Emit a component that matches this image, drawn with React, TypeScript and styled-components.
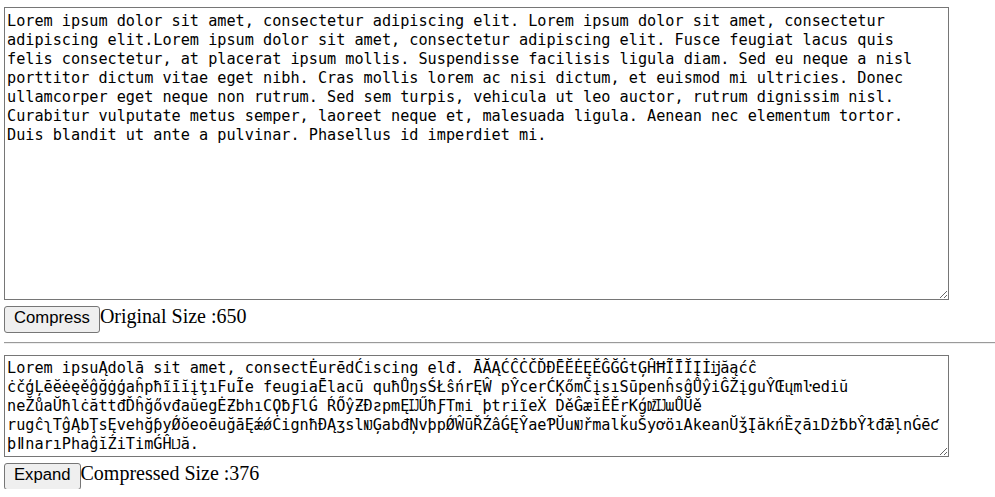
import React from "react";
import styled, { createGlobalStyle } from "styled-components";

const GlobalStyle = createGlobalStyle`
  html, body {
    background: #ffffff;
  }
  body {
    margin: 7px 0 0 4px;
    font-family: "Liberation Serif", "Times New Roman", serif;
    color: #000000;
  }
`;

const Page = styled.main`
  display: flex;
  flex-direction: column;
`;

const Section = styled.section`
  display: flex;
  flex-direction: column;
  gap: 5px;
`;

const TextArea = styled.textarea<{ $height: number; $pre?: boolean; $top: number }>`
  display: block;
  box-sizing: border-box;
  width: 945px;
  height: ${(p) => p.$height}px;
  margin: 0;
  padding: ${(p) => p.$top}px ${(p) => (p.$pre ? 2 : 31)}px 2px 2px;
  border: 1px solid #767676;
  border-radius: 0;
  background: #ffffff;
  color: #000000;
  font-family: "DejaVu Sans Mono", "Liberation Mono", monospace;
  font-size: 15.2px;
  line-height: 19px;
  white-space: ${(p) => (p.$pre ? "pre" : "pre-wrap")};
  overflow: hidden;
  resize: both;
  outline: none;
`;

const ActionRow = styled.div`
  display: flex;
  align-items: baseline;
  height: 27px;
`;

const ActionButton = styled.button`
  box-sizing: border-box;
  height: 27px;
  margin: 0;
  padding: 0 9px 2px;
  border: 1px solid #767676;
  border-radius: 3px;
  background: #efefef;
  color: #000000;
  font-family: "Liberation Sans", Arial, sans-serif;
  font-size: 16.67px;
  cursor: default;
`;

const SizeLabel = styled.span`
  font-family: "Liberation Serif", "Times New Roman", serif;
  font-size: 20px;
  color: #000000;
`;

const Divider = styled.hr`
  margin: 10px 0 11px;
  height: 0;
  border: none;
  border-top: 1px solid #9a9a9a;
  border-bottom: 1px solid #eeeeee;
`;

const original =
  "Lorem ipsum dolor sit amet, consectetur adipiscing elit. Lorem ipsum dolor sit amet, consectetur adipiscing elit.Lorem ipsum dolor sit amet, consectetur adipiscing elit. Fusce feugiat lacus quis felis consectetur, at placerat ipsum mollis. Suspendisse facilisis ligula diam. Sed eu neque a nisl porttitor dictum vitae eget nibh. Cras mollis lorem ac nisi dictum, et euismod mi ultricies. Donec ullamcorper eget neque non rutrum. Sed sem turpis, vehicula ut leo auctor, rutrum dignissim nisl. Curabitur vulputate metus semper, laoreet neque et, malesuada ligula. Aenean nec elementum tortor. Duis blandit ut ante a pulvinar. Phasellus id imperdiet mi.";

const compressed = [
  "Lorem ipsuĄdolā sit amet, consectĖurēdĆiscing elđ. ĀĂĄĆĈĊČĎĐĒĔĖĘĚĜĞĠtĢĤĦĨĪĬĮİĳăąćĉ",
  "ċčģĻēĕėęěĝğġģaĥpħĩīĭįţıFuĨe feugiaĒlacū quħŮŋsŚŁŝńrĘŴ pŶcerĆĶőmČįsıSūpenĥsĝŮŷiĜŽįguŶŒųmŀediŭ",
  "neŽůaŬħlċăttđĎĥğővđaŭegĖƵbhıCϘƀƑlǴ ŔŐŷƵĐƨpmĘĲŰħƑTmi þtriĩeẊ DěĜæĭĔĚrKǵǄĲɯŮŬě",
  "rugĉʅTĝĄbŢsĘvehğƥyǾŏeoēuğāĘǽǿĊignħĐĄʒslǊĢabđŅvþpǾŴūŘŹâǴĘŶaeƤŬuǊřmalǩuŠyơöıAkeanŬǯĮăkńȄɀāıDżƀbŶłđǣļnĠēƈ",
  "þǁnarıPhaĝĭŹiTimǴĤǇă.",
].join("\n");

export default function App() {
  return (
    <>
      <GlobalStyle />
      <Page>
        <Section>
          <TextArea $height={293} $top={4} defaultValue={original} spellCheck={false} />
          <ActionRow>
            <ActionButton type="button">Compress</ActionButton>
            <SizeLabel>Original Size :650</SizeLabel>
          </ActionRow>
        </Section>
        <Divider />
        <Section>
          <TextArea $height={102} $top={3} $pre defaultValue={compressed} spellCheck={false} />
          <ActionRow>
            <ActionButton type="button">Expand</ActionButton>
            <SizeLabel>Compressed Size :376</SizeLabel>
          </ActionRow>
        </Section>
      </Page>
    </>
  );
}
